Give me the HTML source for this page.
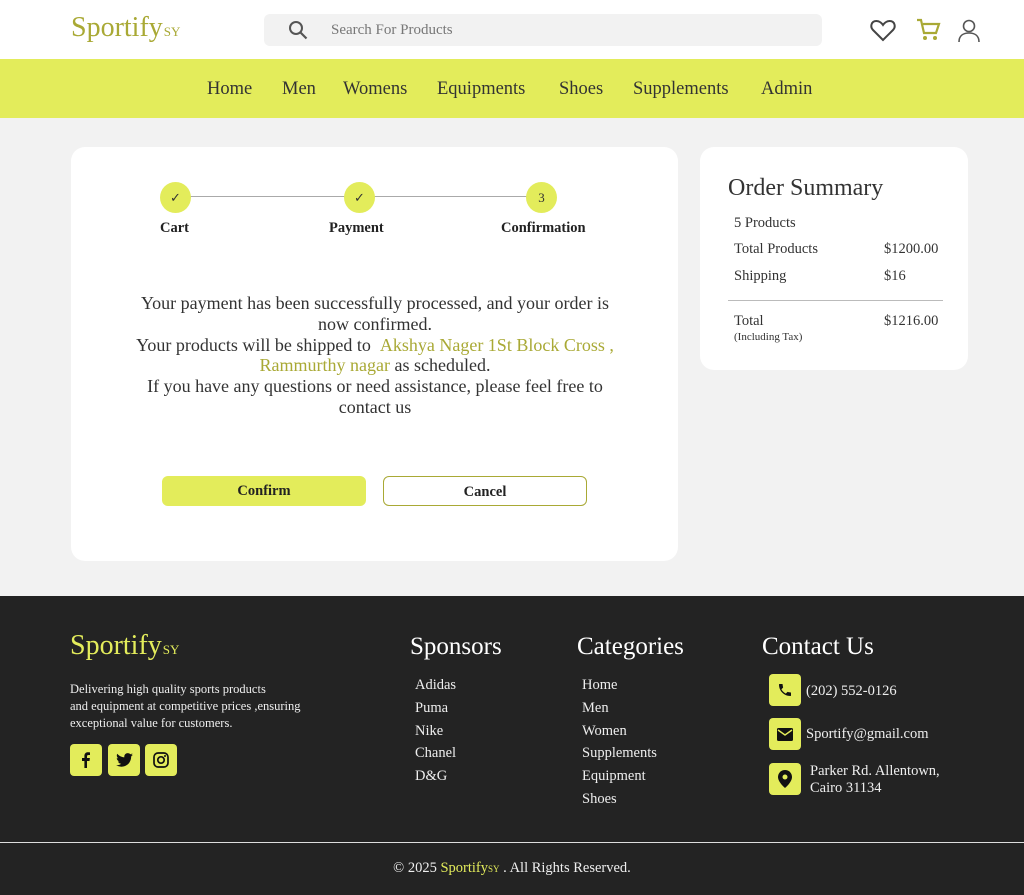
<!DOCTYPE html>
<html><head><meta charset="utf-8"><style>
*{box-sizing:border-box;margin:0;padding:0}
body{width:1024px;height:895px;background:#f2f2f2;font-family:"Liberation Serif",serif;color:#333;position:relative;overflow:hidden}
.abs{position:absolute}
.logo{font-size:28px;color:#a9a935}
.logo small{font-size:13px;margin-left:1px}
header{position:absolute;left:0;top:0;width:1024px;height:59px;background:#fff}
.search{left:264px;top:14px;width:558px;height:32px;background:#f2f2f2;border-radius:6px}
.search span{position:absolute;left:67px;top:8px;font-size:15px;color:#777}
nav{position:absolute;top:59px;left:0;width:1024px;height:59px;background:#e3ec5b;font-size:18.5px;color:#333}
nav span{position:absolute;top:20px}
.card{background:#fff;border-radius:14px}
.circ{width:31px;height:31px;border-radius:50%;background:#e3ec5b;text-align:center;line-height:31px;font-size:13px;top:182px}
.lbl{top:220px;font-size:14.5px;color:#222;font-weight:bold}
.msg{left:125px;width:500px;top:293px;text-align:center;font-size:18px;line-height:20.8px;color:#333}
.hl{color:#a9a935}
.btn{top:476px;width:204px;height:30px;border-radius:6px;text-align:center;line-height:30px;font-size:14.5px;color:#222;font-weight:bold}
footer{position:absolute;left:0;top:596px;width:1024px;height:299px;background:#232323;color:#eee}
footer .h{font-size:25px;color:#fff;position:absolute;top:37px}
.lst{position:absolute;top:78px;font-size:14.5px;line-height:22.8px;color:#eee}
.sq{position:absolute;width:32px;height:32px;background:#e3ec5b;border-radius:4px;display:flex;align-items:center;justify-content:center}
.ct{position:absolute;font-size:14.5px;color:#eee}
</style></head><body>
<header>
<div class="abs logo" style="left:71px;top:12px">Sportify<small>SY</small></div>
<div class="abs search"><svg class="abs" style="left:24px;top:6px" width="20" height="20" viewBox="0 0 20 20"><circle cx="8" cy="8" r="6" fill="none" stroke="#555" stroke-width="2"/><path d="M12.5 12.5l6 6" stroke="#555" stroke-width="2.2"/></svg><span>Search For Products</span></div>
<svg class="abs" style="left:870px;top:18px" width="26" height="24" viewBox="0 0 26 24"><path d="M13 22 3 12C0 9 1 3 6.5 3 9.5 3 12 5.5 13 7 14 5.5 16.5 3 19.5 3 25 3 26 9 23 12Z" fill="none" stroke="#444" stroke-width="2"/></svg>
<svg class="abs" style="left:915px;top:17px" width="26" height="26" viewBox="0 0 26 26"><path d="M2 3h4l3 13h12l3-9H8" fill="none" stroke="#a9a935" stroke-width="2.2"/><circle cx="10" cy="21" r="2" fill="#a9a935"/><circle cx="20" cy="21" r="2" fill="#a9a935"/></svg>
<svg class="abs" style="left:957px;top:18px" width="24" height="26" viewBox="0 0 24 26"><circle cx="12" cy="8" r="5.5" fill="none" stroke="#555" stroke-width="1.6"/><path d="M2 24c0-6 4-9 10-9s10 3 10 9" fill="none" stroke="#555" stroke-width="1.6"/></svg>
</header>
<nav><span style="left:207px">Home</span><span style="left:282px">Men</span><span style="left:343px">Womens</span><span style="left:437px">Equipments</span><span style="left:559px">Shoes</span><span style="left:633px">Supplements</span><span style="left:761px">Admin</span></nav>

<div class="abs card" style="left:71px;top:147px;width:607px;height:414px"></div>
<div class="abs" style="left:175px;top:196px;width:367px;height:1px;background:#aaa"></div>
<div class="abs circ" style="left:160px">✓</div>
<div class="abs circ" style="left:344px">✓</div>
<div class="abs circ" style="left:526px">3</div>
<div class="abs lbl" style="left:160px">Cart</div>
<div class="abs lbl" style="left:329px">Payment</div>
<div class="abs lbl" style="left:501px">Confirmation</div>
<div class="abs msg">Your payment has been successfully processed, and your order is now confirmed.<br>Your products will be shipped to <span class="hl">&nbsp;Akshya Nager 1St Block Cross , Rammurthy nagar</span> as scheduled.<br>If you have any questions or need assistance, please feel free to contact us</div>
<div class="abs btn" style="left:162px;background:#e3ec5b">Confirm</div>
<div class="abs btn" style="left:383px;border:1px solid #a9a935;background:#fff">Cancel</div>

<div class="abs card" style="left:700px;top:147px;width:268px;height:223px"></div>
<div class="abs" style="left:728px;top:175px;font-size:24px;color:#333">Order Summary</div>
<div class="abs" style="left:734px;top:215px;font-size:14.5px">5 Products</div>
<div class="abs" style="left:734px;top:241px;font-size:14.5px">Total Products</div>
<div class="abs" style="left:884px;top:241px;font-size:14.5px">$1200.00</div>
<div class="abs" style="left:734px;top:268px;font-size:14.5px">Shipping</div>
<div class="abs" style="left:884px;top:268px;font-size:14.5px">$16</div>
<div class="abs" style="left:728px;top:300px;width:215px;height:1px;background:#bbb"></div>
<div class="abs" style="left:734px;top:313px;font-size:14.5px">Total</div>
<div class="abs" style="left:734px;top:331px;font-size:11px">(Including Tax)</div>
<div class="abs" style="left:884px;top:313px;font-size:14.5px">$1216.00</div>

<footer>
<div class="abs logo" style="left:70px;top:34px;color:#e3ec5b">Sportify<small>SY</small></div>
<div class="abs" style="left:70px;top:85px;font-size:12.5px;line-height:17px;color:#eee">Delivering high quality sports products<br>and equipment at competitive prices ,ensuring<br>exceptional value for customers.</div>
<div class="sq" style="left:70px;top:148px"><svg width="14" height="16" viewBox="0 0 14 16"><path d="M8 16V9h2.5l.4-3H8V4.5c0-.9.3-1.5 1.6-1.5H11V.4C10.6.3 9.8.2 8.9.2 6.8.2 5.4 1.5 5.4 3.8V6H3v3h2.4v7z" fill="#111"/></svg></div>
<div class="sq" style="left:108px;top:148px"><svg width="17" height="14" viewBox="0 0 24 20"><path d="M24 2.4c-.9.4-1.8.6-2.8.8 1-.6 1.8-1.6 2.2-2.7-1 .6-2 1-3.1 1.2C19.3.7 18 .1 16.6.1c-2.7 0-4.9 2.2-4.9 4.9 0 .4 0 .8.1 1.1C7.7 5.9 4.1 4 1.7 1 1.2 1.7 1 2.6 1 3.5c0 1.7.9 3.2 2.2 4.1-.8 0-1.600-.2-2.2-.6v.1c0 2.4 1.7 4.4 3.9 4.8-.4.1-.8.2-1.3.2-.3 0-.6 0-.9-.1.6 2 2.4 3.4 4.6 3.4-1.700 1.3-3.8 2.1-6.1 2.1-.4 0-.8 0-1.2-.1 2.2 1.4 4.8 2.2 7.5 2.2 9.1 0 14-7.5 14-14v-.6c1-.7 1.8-1.6 2.5-2.6z" fill="#111"/></svg></div>
<div class="sq" style="left:145px;top:148px"><svg width="16" height="16" viewBox="0 0 16 16"><rect x="1" y="1" width="14" height="14" rx="4" fill="none" stroke="#111" stroke-width="1.7"/><circle cx="8" cy="8" r="3.2" fill="none" stroke="#111" stroke-width="1.7"/><circle cx="12" cy="4" r="1" fill="#111"/></svg></div>
<div class="h" style="left:410px">Sponsors</div>
<div class="h" style="left:577px">Categories</div>
<div class="h" style="left:762px">Contact Us</div>
<div class="lst" style="left:415px">Adidas<br>Puma<br>Nike<br>Chanel<br>D&amp;G</div>
<div class="lst" style="left:582px">Home<br>Men<br>Women<br>Supplements<br>Equipment<br>Shoes</div>
<div class="sq" style="left:769px;top:78px"><svg width="16" height="16" viewBox="0 0 24 24"><path d="M6.6 10.8c1.4 2.8 3.8 5.1 6.6 6.6l2.2-2.2c.3-.3.7-.4 1-.2 1.1.4 2.3.6 3.6.6.6 0 1 .4 1 1V20c0 .6-.4 1-1 1C10.6 21 3 13.4 3 4c0-.6.4-1 1-1h3.5c.6 0 1 .4 1 1 0 1.2.2 2.4.6 3.6.1.3 0 .7-.2 1z" fill="#111"/></svg></div>
<div class="ct" style="left:806px;top:87px">(202) 552-0126</div>
<div class="sq" style="left:769px;top:122px"><svg width="16" height="13" viewBox="0 0 16 13"><rect width="16" height="13" rx="1.5" fill="#111"/><path d="M1 2l7 5 7-5" fill="none" stroke="#e3ec5b" stroke-width="1.4"/></svg></div>
<div class="ct" style="left:806px;top:130px">Sportify@gmail.com</div>
<div class="sq" style="left:769px;top:167px"><svg width="14" height="18" viewBox="0 0 14 18"><path d="M7 0C3.1 0 0 3.1 0 7c0 5.2 7 11 7 11s7-5.8 7-11c0-3.9-3.1-7-7-7z" fill="#111"/><circle cx="7" cy="7" r="2.5" fill="#e3ec5b"/></svg></div>
<div class="ct" style="left:810px;top:167px;line-height:17px">Parker Rd. Allentown,<br>Cairo 31134</div>
<div class="abs" style="left:0;top:246px;width:1024px;height:1px;background:#ddd"></div>
<div class="abs" style="left:0;top:264px;width:1024px;text-align:center;font-size:14.5px;color:#eee">© 2025 <span style="color:#e3ec5b">Sportify<small style="font-size:9px">SY</small></span> . All Rights Reserved.</div>
</footer>
</body></html>
